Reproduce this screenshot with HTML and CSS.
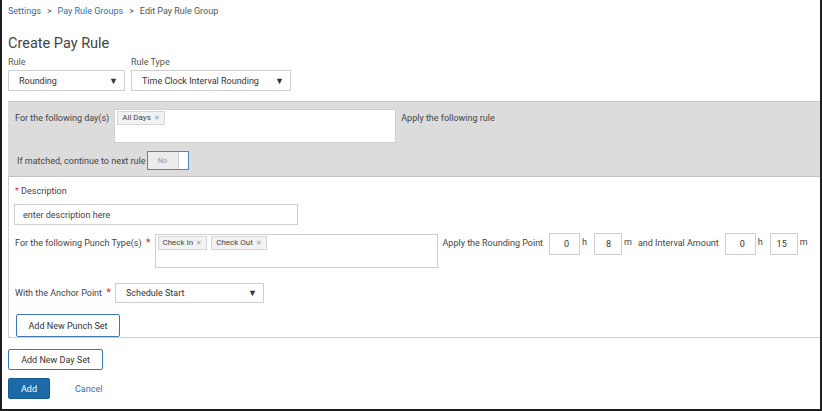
FILE: index.html
```html
<!DOCTYPE html>
<html>
<head>
<meta charset="utf-8">
<link rel="stylesheet" href="styles.css">
</head>
<body>
<div class="frame">
  <div class="crumbs">
    <a class="crumb">Settings</a>
    <span class="sep">&gt;</span>
    <a class="crumb">Pay Rule Groups</a>
    <span class="sep">&gt;</span>
    <span class="cur">Edit Pay Rule Group</span>
  </div>
  <h1 class="title">Create Pay Rule</h1>
  <div class="top-fields">
    <div class="field">
      <div class="label">Rule</div>
      <div class="select sel-rule"><span>Rounding</span><span class="caret">&#9660;</span></div>
    </div>
    <div class="field">
      <div class="label">Rule Type</div>
      <div class="select sel-type"><span>Time Clock Interval Rounding</span><span class="caret">&#9660;</span></div>
    </div>
  </div>

  <div class="day-panel">
    <div class="row days-row">
      <span class="txt days-label">For the following day(s)</span>
      <div class="tagbox days-box"><span class="tag">All Days <span class="x">&#10005;</span></span></div>
      <span class="txt apply-label">Apply the following rule</span>
    </div>
    <div class="row match-row">
      <span class="txt">If matched, continue to next rule</span>
      <div class="toggle"><span class="tog-no">No</span><span class="tog-knob"></span></div>
    </div>
  </div>

  <div class="punch-panel">
    <div class="txt desc-label"><span class="req">*</span> Description</div>
    <div class="input desc-input">enter description here</div>
    <div class="row punch-row">
      <span class="txt punch-label">For the following Punch Type(s) <span class="req big">*</span></span>
      <div class="tagbox punch-box">
        <span class="tag">Check In <span class="x">&#10005;</span></span>
        <span class="tag">Check Out <span class="x">&#10005;</span></span>
      </div>
      <span class="txt round-label">Apply the Rounding Point</span>
      <div class="num n1">0</div><span class="unit">h</span>
      <div class="num n2">8</div><span class="unit">m</span>
      <span class="txt int-label">and Interval Amount</span>
      <div class="num n1">0</div><span class="unit">h</span>
      <div class="num n2">15</div><span class="unit">m</span>
    </div>
    <div class="row anchor-row">
      <span class="txt anchor-label">With the Anchor Point <span class="req big">*</span></span>
      <div class="select sel-anchor"><span>Schedule Start</span><span class="caret">&#9660;</span></div>
    </div>
    <button class="btn-outline punch-btn">Add New Punch Set</button>
  </div>

  <button class="btn-outline day-btn">Add New Day Set</button>
  <div class="actions">
    <button class="btn-primary">Add</button>
    <a class="cancel">Cancel</a>
  </div>
</div>
</body>
</html>
```

FILE: styles.css
```css
* { box-sizing: border-box; }
html, body { margin: 0; padding: 0; }
body {
  font-family: Roboto, "Liberation Sans", sans-serif;
  color: #444;
  background: #fff;
}
.frame {
  width: 822px;
  height: 411px;
  border-left: 2px solid #1e1e1e;
  border-right: 2px solid #1e1e1e;
  border-bottom: 2px solid #1e1e1e;
  padding: 5px 0 0 6px;
  overflow: hidden;
}
.crumbs {
  font-size: 9px;
  line-height: 12px;
  display: flex;
  gap: 6px;
  color: #555;
}
.crumb { color: #2f6fa8; }
.sep { color: #555; }
.cur { color: #555; }
.title {
  margin: 18px 0 0 0;
  font-size: 14.5px;
  font-weight: 400;
  line-height: 18px;
  color: #444;
}
.top-fields {
  display: flex;
  gap: 6px;
  margin-top: 4px;
}
.label {
  font-size: 9px;
  line-height: 11px;
  color: #555;
}
.select {
  margin-top: 2px;
  height: 21px;
  border: 1px solid #cfcfcf;
  background: #fff;
  display: flex;
  align-items: center;
  justify-content: space-between;
  font-size: 9px;
  color: #333;
  padding: 0 6px 0 10px;
  white-space: nowrap;
}
.caret { font-size: 9px; color: #333; }
.sel-rule { width: 117px; }
.sel-type { width: 160px; }
.day-panel {
  margin-top: 10px;
  height: 76px;
  background: #dcdcdc;
  border-top: 1px solid #cacaca;
  border-bottom: 1px solid #c4c4c4;
  padding: 7px 0 0 7px;
}
.row { display: flex; align-items: flex-start; }
.txt { font-size: 9px; line-height: 12px; color: #444; white-space: nowrap; flex-shrink: 0; }
.days-label { margin-top: 3px; }
.tagbox {
  background: #fff;
  border: 1px solid #cfcfcf;
  height: 34px;
  padding: 1px 2px;
  display: flex;
  align-items: flex-start;
  gap: 4px;
  flex-shrink: 0;
}
.days-box { width: 282px; margin-left: 5px; }
.tag {
  background: #f2f2f2;
  border: 1px solid #d6d6d6;
  font-size: 8px;
  line-height: 12px;
  padding: 0 4px;
  color: #444;
  display: inline-flex;
  gap: 3px;
  white-space: nowrap;
}
.x { color: #999; font-size: 7px; }
.apply-label { margin-left: 5px; margin-top: 3px; }
.match-row { margin-top: 8px; align-items: center; padding-left: 2px; }
.toggle {
  width: 42px;
  height: 19px;
  border: 1px solid #4d86b8;
  background: #fff;
  display: flex;
  margin-left: 1px;
}
.tog-no {
  width: 30px;
  background: #ececec;
  font-size: 7.5px;
  color: #999;
  display: flex;
  align-items: center;
  justify-content: center;
}
.tog-knob { flex: 1; background: #fff; border-left: 1px solid #d0d0d0; }
.punch-panel {
  border-left: 1px solid #cfcfcf;
  border-bottom: 1px solid #cfcfcf;
  height: 161px;
  padding: 8px 0 0 6px;
}
.req { color: #d33; }
.req.big { font-size: 11px; margin-left: 2px; line-height: 10px; }
.desc-input {
  margin-top: 7px;
  width: 284px;
  height: 21px;
  border: 1px solid #cfcfcf;
  font-size: 9px;
  color: #444;
  padding: 0 8px;
  display: flex;
  align-items: center;
  margin-left: -1px;
}
.punch-row { margin-top: 9px; }
.punch-label { margin-top: 3px; }
.punch-box { width: 283px; margin-left: 4px; }
.round-label { margin-left: 5px; margin-top: 3px; }
.num {
  height: 22px;
  border: 1px solid #cfcfcf;
  background: #fff;
  font-size: 9px;
  color: #333;
  display: flex;
  align-items: center;
  justify-content: flex-end;
  padding-right: 10px;
  margin-top: -1px;
  flex-shrink: 0;
}
.n1 { width: 31px; }
.n2 { width: 28px; }
.round-label + .num { margin-left: 6px; }
.unit { font-size: 9px; line-height: 12px; margin: 2px 7px 0 2px; color: #444; flex-shrink: 0; }
.int-label { margin-top: 3px; margin-right: 6px; }
.unit + .int-label { margin-left: -1px; }
.anchor-row { margin-top: 15px; align-items: center; }
.sel-anchor { width: 149px; margin-top: 0; height: 20px; margin-left: 4px; }
.btn-outline {
  font-family: inherit;
  font-size: 9px;
  color: #333;
  background: #fff;
  border: 1px solid #3a78b0;
  border-radius: 2px;
  cursor: pointer;
  display: block;
}
.punch-btn { margin-top: 11px; margin-left: 1px; width: 104px; height: 23px; }
.day-btn { margin-top: 11px; width: 95px; height: 21px; }
.actions { display: flex; align-items: center; margin-top: 8px; }
.btn-primary {
  font-family: inherit;
  font-size: 9px;
  color: #fff;
  background: #1c6aa8;
  border: 1px solid #175d94;
  border-radius: 2px;
  width: 42px;
  height: 21px;
}
.cancel { color: #2f6fa8; font-size: 9px; margin-left: 25px; }
```
